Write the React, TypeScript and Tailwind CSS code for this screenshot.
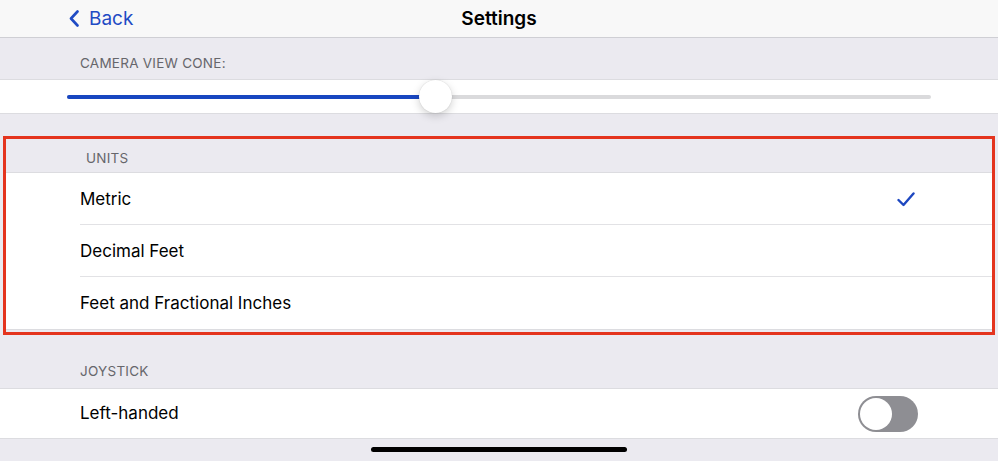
import React from 'react';

const font = { fontFamily: 'Inter, "Noto Sans", sans-serif' };

function SectionHeader({ label, className = '' }: { label: string; className?: string }) {
  return (
    <div className={`flex items-end pl-[80px] text-[13.5px] tracking-[0.25px] text-[#66666b] ${className}`}>
      {label}
    </div>
  );
}

function Check() {
  return (
    <svg width="18" height="15" viewBox="0 0 18 15" fill="none">
      <path d="M1.5 8 L6.5 13 L16.5 1.5" stroke="#1d47c0" strokeWidth="2.4" strokeLinecap="round" strokeLinejoin="round" />
    </svg>
  );
}

export default function App() {
  const units = ['Metric', 'Decimal Feet', 'Feet and Fractional Inches'];
  const selected = 'Metric';

  return (
    <div className="w-[998px] h-[461px] overflow-hidden bg-[#ebeaf0] text-black flex flex-col" style={font}>
      {/* nav bar */}
      <div className="h-[38px] shrink-0 bg-[#f8f8f8] border-b border-[#cfcfd4] grid grid-cols-3 items-center">
        <div className="flex items-center pl-[69px] gap-[10px] text-[#1f4bc4]">
          <svg width="10" height="17" viewBox="0 0 10 17" fill="none">
            <path d="M8.5 1.5 L2 8.5 L8.5 15.5" stroke="#1f4bc4" strokeWidth="2.6" strokeLinecap="round" strokeLinejoin="round" />
          </svg>
          <span className="text-[19px] leading-none">Back</span>
        </div>
        <div className="text-center text-[19px] font-semibold leading-none">Settings</div>
        <div />
      </div>

      {/* camera view cone */}
      <SectionHeader label="CAMERA VIEW CONE:" className="h-[41px] pb-[6px]" />
      <div className="h-[35px] shrink-0 bg-white border-y border-[#dcdce0] flex items-center pl-[67px] pr-[67px]">
        <div className="relative flex-1 h-[4px] rounded-full bg-[#dadadc]">
          <div className="absolute left-0 top-0 h-full w-[368px] rounded-full bg-[#1846c0]" />
          <div className="absolute left-[352px] top-[-15px] w-[33px] h-[33px] rounded-full bg-white shadow-[0_3px_8px_rgba(0,0,0,0.18),0_0_1px_rgba(0,0,0,0.2)]" />
        </div>
      </div>

      <div className="h-[22px] shrink-0" />

      {/* units, annotated */}
      <div className="mx-[3px] border-[3px] border-[#e4341e] shrink-0">
        <SectionHeader label="UNITS" className="h-[33px] pb-[4px] pl-[74px]" />
        <div className="bg-white border-t border-[#dcdce0]">
          {units.map((u, i) => (
            <div key={u} className="pl-[74px]">
              <div className={`h-[52px] flex items-center justify-between pr-[77px] pt-[2px] ${i < units.length - 1 ? 'border-b border-[#e2e2e5]' : ''}`}>
                <span className="text-[17px]">{u}</span>
                {u === selected && <Check />}
              </div>
            </div>
          ))}
        </div>
        <div className="h-[3px] border-t border-[#dcdce0]" />
      </div>

      {/* joystick */}
      <SectionHeader label="JOYSTICK" className="h-[53px] pb-[7px]" />
      <div className="h-[51px] shrink-0 bg-white border-y border-[#dcdce0] flex items-center justify-between pl-[80px] pr-[80px] pt-[1px]">
        <span className="text-[17px]">Left-handed</span>
        <div className="w-[60px] h-[36px] rounded-full bg-[#8e8e93] p-[2px] flex items-center">
          <div className="w-[32px] h-[32px] rounded-full bg-white" />
        </div>
      </div>

      {/* home indicator */}
      <div className="flex-1 flex justify-center pt-[8px]">
        <div className="w-[256px] h-[5px] rounded-full bg-black" />
      </div>
    </div>
  );
}
